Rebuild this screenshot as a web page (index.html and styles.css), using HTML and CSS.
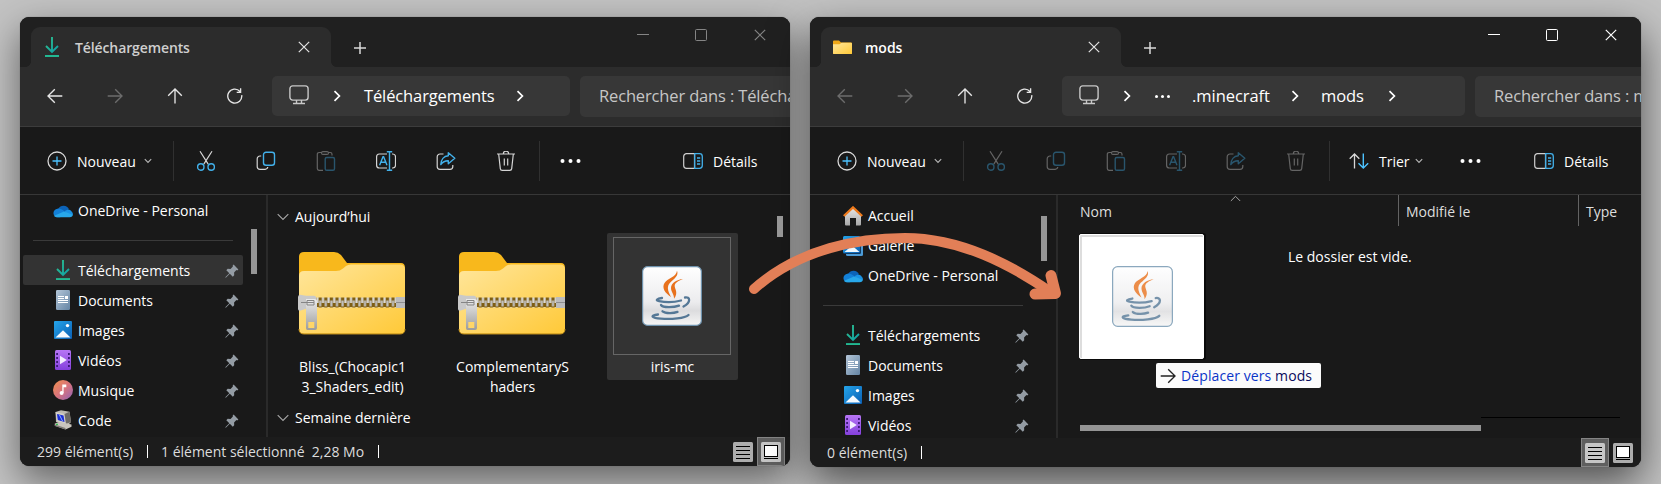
FILE: index.html
```html
<!DOCTYPE html>
<html lang="fr">
<head>
<meta charset="utf-8">
<title>Explorateur de fichiers</title>
<link rel="stylesheet" href="styles.css">
</head>
<body>
<svg class="defs" width="0" height="0" aria-hidden="true">
  <defs>
    <linearGradient id="gDown" x1="0" y1="0" x2="1" y2="1"><stop offset="0" stop-color="#2fc28b"/><stop offset="1" stop-color="#0f9fa8"/></linearGradient>
    <linearGradient id="gFolder" x1="0" y1="0" x2="1" y2="1"><stop offset="0" stop-color="#ffe69c"/><stop offset="1" stop-color="#ffc938"/></linearGradient>
    <linearGradient id="gMetal" x1="0" y1="0" x2="0" y2="1"><stop offset="0" stop-color="#ececec"/><stop offset="1" stop-color="#9c9c9c"/></linearGradient>
    <linearGradient id="gDoc" x1="0" y1="0" x2="1" y2="1"><stop offset="0" stop-color="#b4c6d8"/><stop offset="1" stop-color="#6484a4"/></linearGradient>
    <linearGradient id="gImg" x1="0" y1="0" x2="1" y2="1"><stop offset="0" stop-color="#25a5ea"/><stop offset="1" stop-color="#0a5fb4"/></linearGradient>
    <linearGradient id="gVid" x1="0" y1="0" x2="0" y2="1"><stop offset="0" stop-color="#b776f5"/><stop offset="1" stop-color="#8440dc"/></linearGradient>
    <linearGradient id="gMus" x1="0" y1="0" x2="1" y2="1"><stop offset="0" stop-color="#f0914c"/><stop offset=".5" stop-color="#d9747c"/><stop offset="1" stop-color="#8f62b8"/></linearGradient>
    <linearGradient id="gHome" x1="0" y1="0" x2="0" y2="1"><stop offset="0" stop-color="#e8e8e8"/><stop offset="1" stop-color="#a8a8a8"/></linearGradient>
    <linearGradient id="gJava" x1="0" y1="0" x2="0" y2="1"><stop offset="0" stop-color="#fff"/><stop offset=".6" stop-color="#ececee"/><stop offset=".75" stop-color="#dcdcde"/><stop offset="1" stop-color="#f6f6f6"/></linearGradient>
    <pattern id="pTeeth" width="5.6" height="10" patternUnits="userSpaceOnUse" x="18" y="46">
      <rect width="5.6" height="10" fill="#7e5e14"/><rect x=".3" width="2.2" height="6" fill="#dcdcdc"/><rect x="3.1" y="3.5" width="2.2" height="6" fill="#c2c2c2"/>
    </pattern>

    <symbol id="down" viewBox="0 0 14 20"><path d="M7 0v14.500M1 9l6 6 6-6" fill="none" stroke="url(#gDown)" stroke-width="1.900"/><path d="M0 18.100h14v1.900H0z" fill="#22b892"/></symbol>
    <symbol id="close" viewBox="0 0 12 12"><path d="M.8.8l10.400 10.400M11.200.8L.8 11.200" fill="none" stroke="currentColor" stroke-width="1.200"/></symbol>
    <symbol id="plus" viewBox="0 0 12 12"><path d="M6 0v12M0 6h12" fill="none" stroke="currentColor" stroke-width="1.500"/></symbol>
    <symbol id="min" viewBox="0 0 12 12"><path d="M0 5.500h12" fill="none" stroke="currentColor"/></symbol>
    <symbol id="max" viewBox="0 0 12 12"><rect x=".5" y=".5" width="11" height="11" rx="1" fill="none" stroke="currentColor"/></symbol>
    <symbol id="back" viewBox="0 0 16 16"><path d="M15.300 8H1M7.800 1.200L1 8l6.800 6.800" fill="none" stroke="currentColor" stroke-width="1.350"/></symbol>
    <symbol id="fwd" viewBox="0 0 16 16"><path d="M.7 8H15M8.200 1.200L15 8l-6.800 6.800" fill="none" stroke="currentColor" stroke-width="1.350"/></symbol>
    <symbol id="up" viewBox="0 0 16 16"><path d="M8 15.500V1M1.200 7.800L8 1l6.800 6.800" fill="none" stroke="currentColor" stroke-width="1.350"/></symbol>
    <symbol id="refresh" viewBox="0 0 16 16"><path d="M14.700 7.200A7 7 0 1 1 13 3.500M13.600.3v4H9.700" fill="none" stroke="currentColor" stroke-width="1.350"/></symbol>
    <symbol id="pc" viewBox="0 0 20 20"><rect x=".9" y=".9" width="18.200" height="14.200" rx="2.800" fill="none" stroke="currentColor" stroke-width="1.400"/><path d="M7.500 15v3M12.500 15v3M4 18.500h12" fill="none" stroke="currentColor" stroke-width="1.400"/></symbol>
    <symbol id="chev" viewBox="0 0 8 12"><path d="M1.500 1.200L6.400 6l-4.900 4.800" fill="none" stroke="currentColor" stroke-width="1.700"/></symbol>
    <symbol id="caret" viewBox="0 0 8 6"><path d="M.8 1.200L4 4.400l3.200-3.200" fill="none" stroke="currentColor" stroke-width="1.200"/></symbol>
    <symbol id="group" viewBox="0 0 12 8"><path d="M.7 1.200L6 6.500l5.300-5.300" fill="none" stroke="currentColor" stroke-width="1.100"/></symbol>
    <symbol id="new" viewBox="0 0 20 20"><circle cx="10" cy="10" r="9" fill="none" stroke="#d8d8d8" stroke-width="1.300"/><path d="M10 5.500v9M5.500 10h9" stroke="#4cc2ff" stroke-width="1.300"/></symbol>
    <symbol id="cut" viewBox="0 0 20 20"><path d="M4 .3l8.200 12.800M16 .3L7.800 13.100" fill="none" stroke="currentColor" stroke-width="1.200"/><circle cx="4.800" cy="16" r="3.200" fill="none" stroke="#42b0ea" stroke-width="1.400"/><circle cx="15.200" cy="16" r="3.200" fill="none" stroke="#42b0ea" stroke-width="1.400"/></symbol>
    <symbol id="copy" viewBox="0 0 20 20"><path d="M5.200 5H4a2.800 2.800 0 0 0-2.800 2.800V15.500A2.800 2.800 0 0 0 4 18.300h5a2.800 2.800 0 0 0 2.800-2.300" fill="none" stroke="currentColor" stroke-width="1.200"/><rect x="7.500" y="1.200" width="11" height="13" rx="2.500" fill="none" stroke="#42b0ea" stroke-width="1.400"/></symbol>
    <symbol id="paste" viewBox="0 0 20 20"><path d="M7 19.300H3a1.700 1.700 0 0 1-1.700-1.700V3.200A1.700 1.700 0 0 1 3 1.500h2.500M12.300 1.500h2A1.700 1.700 0 0 1 16 3.200v1.200" fill="none" stroke="currentColor" stroke-width="1.200"/><rect x="5.500" y=".6" width="7" height="2.800" rx="1.400" fill="none" stroke="currentColor" stroke-width="1.100"/><rect x="9.200" y="6.500" width="9.300" height="12.800" rx="1.600" fill="none" stroke="#42b0ea" stroke-width="1.400"/></symbol>
    <symbol id="rename" viewBox="0 0 20 20"><path d="M11 3H3.300A2.800 2.800 0 0 0 .6 5.800v8.400A2.800 2.800 0 0 0 3.300 17H11M16 3h.8a2.800 2.800 0 0 1 2.700 2.800v8.400a2.800 2.800 0 0 1-2.700 2.800H16" fill="none" stroke="currentColor" stroke-width="1.200"/><path d="M3.600 14.200L7 5.800h.6l3.400 8.400M4.800 11.300h5M13.500.7v18.600M10.800.7h5.400M10.800 19.300h5.400" fill="none" stroke="#42b0ea" stroke-width="1.400"/></symbol>
    <symbol id="share" viewBox="0 0 20 20"><path d="M7.500 3H4a2.800 2.800 0 0 0-2.800 2.800v9.700A2.800 2.800 0 0 0 4 18.300h10a2.800 2.800 0 0 0 2.800-2.800V14" fill="none" stroke="currentColor" stroke-width="1.200"/><path d="M12.300 1.700l6.500 5.500-6.500 5.500V9.800C9 9.700 6.800 10.800 4.800 13.600 5 8.700 7.800 5 12.300 4.700z" fill="none" stroke="#42b0ea" stroke-width="1.400" stroke-linejoin="round"/></symbol>
    <symbol id="trash" viewBox="0 0 20 20"><path d="M1 3h18M7.300 2.900a2.700 2.700 0 0 1 5.400 0M2.700 3.200l1.600 14.400a1.900 1.900 0 0 0 1.900 1.700h7.600a1.900 1.900 0 0 0 1.900-1.700L17.300 3.200M8.300 7.500v7M11.700 7.500v7" fill="none" stroke="currentColor" stroke-width="1.200"/></symbol>
    <symbol id="more" viewBox="0 0 20 6"><circle cx="2" cy="3" r="2" fill="currentColor"/><circle cx="10" cy="3" r="2" fill="currentColor"/><circle cx="18" cy="3" r="2" fill="currentColor"/></symbol>
    <symbol id="sort" viewBox="0 0 20 20"><path d="M5.500 17.500V3M.7 7.700L5.500 3l4.800 4.700" fill="none" stroke="#d8d8d8" stroke-width="1.300"/><path d="M14.300 2.500V17M9.500 12.300l4.800 4.700 4.900-4.700" fill="none" stroke="#4cc2ff" stroke-width="1.400"/></symbol>
    <symbol id="details" viewBox="0 0 20 16"><path d="M11.500.7H3.500A2.800 2.800 0 0 0 .7 3.500v9a2.800 2.800 0 0 0 2.800 2.800h8z" fill="none" stroke="#d0d0d0" stroke-width="1.200"/><path d="M11.700.7h4.800a2.800 2.800 0 0 1 2.800 2.800v9a2.800 2.800 0 0 1-2.800 2.800h-4.800zM14 5h3.200M14 8h3.200M14 11h3.200" fill="none" stroke="#42b0ea" stroke-width="1.300"/></symbol>

    <symbol id="minifolder" viewBox="0 0 19 15"><path d="M0 1.500Q0 .5 1 .5h5l2 2h10q1 0 1 1V14H0z" fill="#f0a818"/><path d="M0 4.200h6.500L8.500 2.800H18q1 0 1 1V13q0 1-1 1H1q-1 0-1-1z" fill="url(#gFolder)"/></symbol>
    <symbol id="cloud" viewBox="0 0 20 14"><path d="M3 11C1 8 4 5 5.300 5A6 6 0 0 1 16 5.200L9 10z" fill="#0c63b8"/><path d="M5 13.300A4.300 4.300 0 0 1 4.500 4.700C7 4.200 9 5.500 11 7l2 3-6 3.300z" fill="#1380d8"/><path d="M11.500 7.500C13.500 5 17.500 5 18.600 7.500 20 8.700 20.300 10 19.500 11.300L14 10z" fill="#1a92e4"/><path d="M4.800 13.300C2.500 13.300 1 12 1.200 11.700L11 7.500l8.800 3.300c0 1.500-1.200 2.500-3 2.500z" fill="#28a8ea"/></symbol>
    <symbol id="doc" viewBox="0 0 14 20"><rect width="14" height="20" rx="1.200" fill="url(#gDoc)"/><path d="M2 6.500h6M2 8.500h6M2 10.500h10M2 12.500h10" stroke="#fff"/><path d="M9 6h3v3H9z" fill="#fff"/></symbol>
    <symbol id="img" viewBox="0 0 18 18"><rect width="18" height="18" rx="1" fill="url(#gImg)"/><path d="M1.500 16.500L9 9.300l7.500 7.200z" fill="#f4faff"/><circle cx="13.500" cy="4.600" r="1.700" fill="#fff"/></symbol>
    <symbol id="vid" viewBox="0 0 16 20"><rect width="16" height="20" rx="1.500" fill="url(#gVid)"/><path d="M1.200 3h1.800v2H1.200zM1.200 7h1.800v2H1.200zM1.200 11h1.800v2H1.200zM1.200 15h1.800v2H1.200zM13 3h1.800v2H13zM13 7h1.800v2H13zM13 11h1.800v2H13zM13 15h1.800v2H13z" fill="#3c1a78"/><path d="M5 5.800L11.800 10 5 14.200z" fill="#f3ecff"/></symbol>
    <symbol id="music" viewBox="0 0 20 20"><circle cx="10" cy="10" r="10" fill="url(#gMus)"/><path d="M9.300 4.500h4v2.700h-2.700v5.800H9.300z" fill="#fff"/><circle cx="8.600" cy="13" r="2" fill="#fff"/></symbol>
    <symbol id="code" viewBox="0 0 18 20"><path d="M1.500 2L7 .3l8.500 1.500L17 12l-4 4L2 12z" fill="#bdb9b0"/><path d="M1.500 2l9 2 1.500 10-9-2.500z" fill="#d4d0c8"/><path d="M3 4l6.500 1.500 1 6.500L3.800 10z" fill="#1a2cd8"/><path d="M5.500 5l3 6" stroke="#8db4ff"/><path d="M10.500 4l5-2.200L17 12l-5 2z" fill="#6d6a66"/><path d="M.8 13.500L6 12l11.500 2.500v2.200L11.500 19.500.8 15.800z" fill="#c9c5bd"/><path d="M.8 14.500l10.700 3.500v1.600L.8 16z" fill="#7d7a75"/><path d="M2 14.300h2" stroke="#2cc04a" stroke-width="1.200"/></symbol>
    <symbol id="home" viewBox="0 0 20 20"><path d="M2 9l8-7.500L18 9v9.500q0 1-1 1h-4V12H7v7.500H3q-1 0-1-1z" fill="url(#gHome)"/><path d="M.8 10L10 1.400 19.200 10" fill="none" stroke="#ee7a1c" stroke-width="2.300"/></symbol>
    <symbol id="gallery" viewBox="0 0 20 20"><rect x="3" y="3" width="17" height="17" rx="1.500" fill="#4b9ad6"/><rect width="18" height="18" rx="1.500" fill="#123a60"/><rect width="17" height="17" rx="1.500" fill="url(#gImg)"/><path d="M1.500 16L9 9.500l7.500 6.500z" fill="#eef8ff"/></symbol>
    <symbol id="pin" viewBox="0 0 14 14"><path d="M8.600.6l4.800 4.800-1.200 1-.8-.3-2.300 2.400.1 2.800-1.400 1.400-3-3L.8 13.700l-.5-.5 4-4-3-3 1.400-1.400 2.800.1 2.400-2.300-.3-.8z" fill="#949ca4"/></symbol>

    <symbol id="zip" viewBox="0 0 108 84">
      <path d="M1 6q0-5 5-5h30q4 0 7 3l6 8h54q4 0 4 5v60q0 6-5 6H6q-5 0-5-5z" fill="#f8b81c"/>
      <path d="M1 25q0-5 5-5h32q4 0 7-2.500l3-2.500q2-1.500 5-1.500h49q5 0 5 5v59q0 5-5 5H6q-5 0-5-5z" fill="url(#gFolder)"/>
      <path d="M1 78q0 5 5 5h96q5 0 5-5" fill="none" stroke="#b98a1e" stroke-width="1"/>
      <rect x="18" y="46.500" width="80" height="10" fill="url(#pTeeth)"/>
      <rect x="98" y="46" width="9" height="11" fill="#bcbcbc"/><path d="M98 51.500h9" stroke="#8e8e8e"/>
      <path d="M0 46q0-2 2-2.200l6 1h8q2 0 2 2v9q0 2-2 2H8l-6 2Q0 60 0 58z" fill="#c9c9c9"/>
      <path d="M8 48h8.500q2.500 0 2.500 2.500V77q0 2-2 2H9.500q-1.500 0-1.500-2z" fill="url(#gMetal)"/>
      <rect x="10.300" y="71" width="6" height="6" fill="#ffd668"/><path d="M3 51.500h13M9 49.500h7v4.500H9z" fill="none" stroke="#858585"/>
    </symbol>

    <symbol id="java" viewBox="0 0 60 60">
      <rect x=".6" y=".6" width="58.800" height="58.800" rx="5" fill="url(#gJava)" stroke="#6f93ae" stroke-width="1.200"/>
      <g fill="#e8711c">
        <path d="M35 4.800c2 5-3 8-6.500 11.500-4 4-3 8 .5 14.700-6-4-9.500-9-6.500-14C25 12.500 34.500 11 35 4.800z"/>
        <path d="M41 13c-5 2-8.500 4-8.300 7.200.3 3.500 3.800 6.300-.7 12.600.3-4.500-3-6.500-3-10.800C29 17 35 13.500 41 13z"/>
      </g>
      <g fill="none" stroke="#557896" stroke-width="2.300" stroke-linecap="round">
        <path d="M20 32c-5 .7-7 2.400-3 3.100 6 1.200 16 1 22-.6"/>
        <path d="M43 31.500c5-1 6.500 4.500-1.500 9"/>
        <path d="M19 39c2 3 13 2.600 18 .6M20.500 45.300c3 2.400 11 2.200 15 .6"/>
        <path d="M16 48.500c-9 1.200-6 3.500 3 4.200 10 .7 24-.2 27.500-3.700"/>
      </g>
    </symbol>

    <symbol id="list" viewBox="0 0 20 20"><rect width="20" height="20" rx="1.500" fill="var(--tile)"/><path d="M3 4.500h14M3 8.500h14M3 12.500h14M3 16.500h14" stroke="#000"/></symbol>
    <symbol id="thumb" viewBox="0 0 20 20"><rect width="20" height="20" rx="1.500" fill="var(--tile)"/><rect x="3.500" y="3.500" width="13" height="11" fill="#fff" stroke="#000"/><path d="M3 16.500h14" stroke="#000"/></symbol>
  </defs>
</svg>

<main class="desktop">
  <section class="window inactive">
    <header class="titlebar">
      <div class="tab">
        <svg class="tab-icon i14x20"><use href="#down"/></svg>
        <span class="tab-title t-down">Téléchargements</span>
        <svg class="i12 tab-close"><use href="#close"/></svg>
      </div>
      <svg class="i12 tab-add"><use href="#plus"/></svg>
      <div class="controls"><svg class="i12"><use href="#min"/></svg><svg class="i12"><use href="#max"/></svg><svg class="i12"><use href="#close"/></svg></div>
    </header>
    <nav class="navbar">
      <div class="arrows"><svg class="i16"><use href="#back"/></svg><svg class="i16 off"><use href="#fwd"/></svg><svg class="i16"><use href="#up"/></svg><svg class="i16"><use href="#refresh"/></svg></div>
      <div class="address">
        <svg class="i20 pc"><use href="#pc"/></svg><svg class="chev"><use href="#chev"/></svg>
        <span class="crumb c-down">Téléchargements</span><svg class="chev"><use href="#chev"/></svg>
      </div>
      <div class="search">Rechercher dans : Téléchargements</div>
    </nav>
    <div class="toolbar">
      <div class="new"><svg class="i20"><use href="#new"/></svg><span class="label">Nouveau</span><svg class="caret"><use href="#caret"/></svg></div>
      <div class="tools">
        <svg class="i20"><use href="#cut"/></svg><svg class="i20"><use href="#copy"/></svg><svg class="i20 dim"><use href="#paste"/></svg><svg class="i20"><use href="#rename"/></svg><svg class="i20"><use href="#share"/></svg><svg class="i20"><use href="#trash"/></svg>
      </div>
      <svg class="more"><use href="#more"/></svg>
      <div class="details"><svg class="i20x16"><use href="#details"/></svg><span class="label">Détails</span></div>
    </div>
    <div class="content">
      <aside class="sidebar">
        <ul class="places">
          <li><svg class="i20x14"><use href="#cloud"/></svg><span>OneDrive - Personal</span></li>
          <li class="rule"></li>
          <li class="selected"><svg class="i14x20"><use href="#down"/></svg><span>Téléchargements</span><svg class="pin"><use href="#pin"/></svg></li>
          <li><svg class="i14x20"><use href="#doc"/></svg><span>Documents</span><svg class="pin"><use href="#pin"/></svg></li>
          <li><svg class="i18"><use href="#img"/></svg><span>Images</span><svg class="pin"><use href="#pin"/></svg></li>
          <li><svg class="i16x20"><use href="#vid"/></svg><span>Vidéos</span><svg class="pin"><use href="#pin"/></svg></li>
          <li><svg class="i20"><use href="#music"/></svg><span>Musique</span><svg class="pin"><use href="#pin"/></svg></li>
          <li><svg class="i18x20"><use href="#code"/></svg><span>Code</span><svg class="pin"><use href="#pin"/></svg></li>
        </ul>
        <div class="thumb side-thumb"></div>
      </aside>
      <div class="files">
        <h2 class="group"><svg class="gcaret"><use href="#group"/></svg>Aujourd’hui</h2>
        <div class="grid">
          <figure><svg class="zip"><use href="#zip"/></svg><figcaption>Bliss_(Chocapic1<br>3_Shaders_edit)</figcaption></figure>
          <figure><svg class="zip"><use href="#zip"/></svg><figcaption>ComplementaryS<br>haders</figcaption></figure>
          <figure class="picked"><div class="frame"><svg class="java"><use href="#java"/></svg></div><figcaption>iris-mc</figcaption></figure>
        </div>
        <h2 class="group week"><svg class="gcaret"><use href="#group"/></svg>Semaine dernière</h2>
        <div class="thumb main-thumb"></div>
      </div>
    </div>
    <footer class="status">
      <span class="s-count">299 élément(s)</span><i></i><span class="s-sel">1 élément sélectionné&nbsp; 2,28 Mo</span><i></i>
      <div class="views"><b><svg class="i20"><use href="#list"/></svg></b><b class="on"><svg class="i20"><use href="#thumb"/></svg></b></div>
    </footer>
  </section>

  <section class="window active">
    <header class="titlebar">
      <div class="tab">
        <svg class="tab-icon mini"><use href="#minifolder"/></svg>
        <span class="tab-title">mods</span>
        <svg class="i12 tab-close"><use href="#close"/></svg>
      </div>
      <svg class="i12 tab-add"><use href="#plus"/></svg>
      <div class="controls"><svg class="i12"><use href="#min"/></svg><svg class="i12"><use href="#max"/></svg><svg class="i12"><use href="#close"/></svg></div>
    </header>
    <nav class="navbar">
      <div class="arrows"><svg class="i16 off"><use href="#back"/></svg><svg class="i16 off"><use href="#fwd"/></svg><svg class="i16"><use href="#up"/></svg><svg class="i16"><use href="#refresh"/></svg></div>
      <div class="address">
        <svg class="i20 pc"><use href="#pc"/></svg><svg class="chev"><use href="#chev"/></svg>
        <svg class="dots"><use href="#more"/></svg>
        <span class="crumb c-mc">.minecraft</span><svg class="chev"><use href="#chev"/></svg>
        <span class="crumb c-mods">mods</span><svg class="chev"><use href="#chev"/></svg>
      </div>
      <div class="search">Rechercher dans : mods</div>
    </nav>
    <div class="toolbar">
      <div class="new"><svg class="i20"><use href="#new"/></svg><span class="label">Nouveau</span><svg class="caret"><use href="#caret"/></svg></div>
      <div class="tools dim">
        <svg class="i20"><use href="#cut"/></svg><svg class="i20"><use href="#copy"/></svg><svg class="i20"><use href="#paste"/></svg><svg class="i20"><use href="#rename"/></svg><svg class="i20"><use href="#share"/></svg><svg class="i20"><use href="#trash"/></svg>
      </div>
      <div class="sort"><svg class="i20"><use href="#sort"/></svg><span class="label">Trier</span><svg class="caret"><use href="#caret"/></svg></div>
      <svg class="more"><use href="#more"/></svg>
      <div class="details"><svg class="i20x16"><use href="#details"/></svg><span class="label">Détails</span></div>
    </div>
    <div class="content">
      <aside class="sidebar">
        <ul class="places">
          <li><svg class="i20"><use href="#home"/></svg><span>Accueil</span></li>
          <li><svg class="i20"><use href="#gallery"/></svg><span>Galerie</span></li>
          <li><svg class="i20x14"><use href="#cloud"/></svg><span>OneDrive - Personal</span></li>
          <li class="rule"></li>
          <li><svg class="i14x20"><use href="#down"/></svg><span>Téléchargements</span><svg class="pin"><use href="#pin"/></svg></li>
          <li><svg class="i14x20"><use href="#doc"/></svg><span>Documents</span><svg class="pin"><use href="#pin"/></svg></li>
          <li><svg class="i18"><use href="#img"/></svg><span>Images</span><svg class="pin"><use href="#pin"/></svg></li>
          <li><svg class="i16x20"><use href="#vid"/></svg><span>Vidéos</span><svg class="pin"><use href="#pin"/></svg></li>
        </ul>
        <div class="thumb side-thumb"></div>
      </aside>
      <div class="files table">
        <div class="columns"><span class="nom">Nom<svg class="asc"><use href="#group"/></svg></span><span class="mod">Modifié le</span><span>Type</span></div>
        <p class="empty">Le dossier est vide.</p>
        <div class="hscroll"><div class="hthumb"></div></div>
      </div>
    </div>
    <footer class="status">
      <span class="s-count0">0 élément(s)</span><i></i>
      <div class="views"><b class="on"><svg class="i20"><use href="#list"/></svg></b><b><svg class="i20"><use href="#thumb"/></svg></b></div>
    </footer>
  </section>
</main>

<div class="ghost"><svg class="ghost-icon"><use href="#java"/></svg></div>
<div class="tip"><svg class="i16"><use href="#fwd"/></svg><span>Déplacer vers <em>mods</em></span></div>
<svg class="arrow" viewBox="740 220 330 90"><g fill="none" stroke="#e27f57" stroke-linecap="round" stroke-linejoin="round"><path d="M754 289C800 248 860 238 905 238C960 238 1010 264 1052 293" stroke-width="10"/><path d="M1051 275.500L1055.500 293.500L1035 294" stroke-width="11"/></g></svg>
</body>
</html>
```
FILE: styles.css
```css
* { box-sizing: border-box; }
body {
  margin: 0;
  width: 1661px;
  height: 484px;
  overflow: hidden;
  position: relative;
  background: #c3c3c3;
  color: #fff;
  font: 14px/20px "Open Sans", "Noto Sans", sans-serif;
}
.defs { position: absolute; }
svg { display: block; flex: none; }
.desktop { display: flex; align-items: flex-start; gap: 20px; padding: 17px 20px; }

.i12 { width: 12px; height: 12px; }
.i16 { width: 16px; height: 16px; }
.i18 { width: 18px; height: 18px; }
.i20 { width: 20px; height: 20px; }
.i14x20 { width: 14px; height: 20px; }
.i16x20 { width: 16px; height: 20px; }
.i18x20 { width: 18px; height: 20px; }
.i20x14 { width: 20px; height: 14px; }
.i20x16 { width: 20px; height: 16px; }

/* window shell */
.window {
  flex: none;
  display: flex;
  flex-direction: column;
  width: 770px;
  height: 449px;
  border-radius: 9px;
  overflow: hidden;
  background: #191919;
  box-shadow: 0 0 1px #555, 0 14px 38px rgba(0, 0, 0, .5);
}
.window.active { width: 831px; height: 450px; box-shadow: 0 0 1px #555, 0 16px 42px rgba(0, 0, 0, .6); }

.titlebar { flex: none; display: flex; height: 50px; padding-left: 11px; background: #202020; }
.tab {
  position: relative;
  display: flex;
  align-items: center;
  width: 300px;
  height: 40px;
  margin-top: 10px;
  padding: 0 21px 0 12px;
  border-radius: 9px 9px 0 0;
  background: #2c2c2c;
}
.tab::before, .tab::after { content: ""; position: absolute; bottom: 0; width: 5px; height: 5px; }
.tab::before { left: -5px; background: radial-gradient(circle at 0 0, transparent 4.500px, #2c2c2c 5px); }
.tab::after { right: -5px; background: radial-gradient(circle at 100% 0, transparent 4.500px, #2c2c2c 5px); }
.tab-icon { margin: 0 16px 0 2px; }
.mini { width: 19px; height: 15px; margin: 0 13px 0 0; }
.tab-title { font-weight: 600; padding-top: 1px; }
.t-down { letter-spacing: -.11px; }
.inactive .tab-title { color: #cfcfcf; }
.tab-close { margin-left: auto; color: #e4e4e4; }
.tab-add { margin: 25px 0 0 23px; color: #d8d8d8; }
.controls { display: flex; gap: 47px; margin: 12px 24px 0 auto; }
.controls svg:first-child { margin-right: -1px; }
.inactive .controls { color: #858585; }

.navbar { flex: none; display: flex; height: 60px; background: #2c2c2c; border-bottom: 1px solid #3c3c3c; overflow: hidden; }
.arrows { display: flex; align-items: center; gap: 44px; width: 242px; flex: none; margin-left: 10px; padding: 0 0 2px 17px; color: #e6e6e6; }
.off { color: #6c6c6c; }
.address { flex: none; display: flex; align-items: center; width: 298px; height: 40px; margin-top: 9px; padding: 0 0 0 17px; border-radius: 5px; background: #373737; }
.active .address { width: 403px; }
.pc { color: #c8c8c8; margin-top: -2px; }
.chev { width: 8px; height: 12px; }
.pc + .chev { margin-left: 24px; }
.crumb { flex: none; white-space: nowrap; font-size: 16.500px; letter-spacing: -.12px; }
.c-down { width: 131px; margin: 0 21px 0 23px; }
.dots { width: 15px; height: 5px; margin-left: 24px; }
.c-mc { width: 77px; margin: 0 22px 0 22px; letter-spacing: -.05px; }
.c-mods { width: 44px; margin: 0 23px 0 22px; }
.search { flex: none; width: 320px; height: 41px; margin: 9px 0 0 10px; padding: 10px 0 0 19px; border-radius: 5px; background: #373737; color: #c6c6c6; font-size: 16.500px; letter-spacing: -.15px; white-space: nowrap; }

.toolbar { flex: none; display: flex; align-items: center; height: 68px; border-bottom: 1px solid #373737; }
.new { display: flex; align-items: center; width: 154px; height: 40px; padding-left: 27px; border-right: 1px solid #303030; }
.new .label { width: 59px; margin: 0 8px 0 10px; }
.label { white-space: nowrap; padding-top: 2px; }
.caret { width: 8px; height: 6px; color: #b4b4b4; }
.tools { display: flex; align-items: center; width: 366px; height: 40px; padding-left: 22px; gap: 40px; border-right: 1px solid #303030; color: #d4d4d4; }
.dim > svg, svg.dim { opacity: .4; }
.more { width: 21px; height: 6px; margin-left: 20px; }
.sort { display: flex; align-items: center; margin-left: 19px; }
.sort .label { width: 28px; margin: 0 8px 0 10px; }
.sort + .more { margin-left: 37px; }
.details { display: flex; align-items: center; margin-left: auto; gap: 10px; width: 107px; }

/* navigation pane */
.content { flex: none; display: flex; height: 242px; overflow: hidden; }
.active .content { height: 243px; }
.sidebar { position: relative; width: 248px; border-right: 2px solid #2a2a2a; }
.places { width: 220px; margin: 1px 0 0 3px; padding: 0; list-style: none; }
.active .places { margin-top: 6px; }
.places li { display: grid; grid-template-columns: 20px 1fr 14px; column-gap: 5px; align-items: center; height: 30px; padding: 0 4px 0 30px; border-radius: 2px; }
.places li > svg { justify-self: center; }
.places li.rule { height: 29px; margin: 0 10px; padding: 0; background: linear-gradient(#3a3a3a, #3a3a3a) 0 14px / 100% 1px no-repeat; }
.places .selected { background: #333; }
.places span { white-space: nowrap; }
.places .rule ~ li span { padding-top: 2px; }
.pin { width: 14px; height: 14px; margin-top: 2px; }
.thumb { position: absolute; width: 6px; background: #969696; }
.side-thumb { left: 231px; top: 34px; height: 45px; }
.active .side-thumb { top: 21px; }

/* file pane */
.files { position: relative; flex: 1; min-width: 0; }
.group { display: flex; align-items: center; gap: 6px; height: 38px; margin: 0 0 0 9px; padding: 12px 0 6px; font: inherit; }
.gcaret { width: 12px; height: 8px; color: #a8a8a8; }
.grid { display: grid; grid-template-columns: 131px 131px 131px; column-gap: 29px; margin-left: 19px; height: 147px; }
figure { display: flex; flex-direction: column; align-items: center; margin: 0; height: 147px; }
.zip { width: 108px; height: 84px; margin: 18px 1px 22px 0; }
figcaption { text-align: center; white-space: nowrap; }
.picked { background: #333; border-radius: 2px; }
.frame { display: grid; place-items: center; width: 118px; height: 118px; margin: 4px 1px 4px 0; border: 1px solid #666; flex: none; }
.java { width: 60px; height: 60px; }
.picked figcaption { margin-top: -2px; }
.week { padding: 0; height: 20px; margin-top: 28px; }
.main-thumb { right: 7px; top: 21px; height: 21px; }

.table { display: flex; flex-direction: column; }
.columns { display: flex; height: 31px; color: #dedede; line-height: 33px; padding-left: 22px; }
.nom { position: relative; width: 318px; }
.asc { position: absolute; left: 150px; top: 0; width: 11px; height: 7px; transform: rotate(180deg); color: #aaa; }
.mod { width: 180px; }
.mod, .mod + span { border-left: 1px solid #636363; padding-left: 7px; }
.empty { margin: 21px 0 0 230px; }
.hscroll { margin: auto 21px 7px 22px; height: 14px; padding-top: 8px; background: linear-gradient(#000, #000) 100% 0 / 139px 1px no-repeat; }
.hthumb { width: 401px; height: 6px; background: #949494; }

.status { flex: 1; display: flex; align-items: center; padding-left: 17px; background: #1c1c1c; color: #dcdcdc; white-space: nowrap; }
.status i { width: 1px; height: 13px; background: #fff; }
.s-count { width: 110px; }
.s-count0 { width: 94px; }
.s-sel { width: 230px; padding-left: 13px; }
.views { display: flex; height: 100%; margin-left: auto; padding-right: 5px; --tile: #adadad; }
.active .views { padding-right: 4px; }
.views b { display: grid; place-items: center; width: 28px; }
.views .on { background: #5f5f5f; border: 1px solid #858585; --tile: #c6c6c6; }

/* drag and drop overlay */
.ghost { position: absolute; left: 1079px; top: 234px; display: grid; place-items: center; width: 125px; height: 125px; background: #fff; border-radius: 2px; border: 1px solid #fff; box-shadow: inset 1px 1px 0 1px #ddd, 1px 0 0 1px #0a0a0a; }
.ghost-icon { width: 61px; height: 61px; margin-left: 1px; opacity: .8; }
.tip { position: absolute; left: 1156px; top: 363px; display: flex; align-items: center; gap: 5px; width: 165px; height: 25px; padding-left: 4px; background: #fbfbfb; border-radius: 2px; color: #0a34c8; white-space: nowrap; letter-spacing: .1px; }
.tip svg { color: #222; }
.tip em { font-style: normal; color: #0a0a5c; }
.arrow { position: absolute; left: 740px; top: 220px; width: 330px; height: 90px; }
```
